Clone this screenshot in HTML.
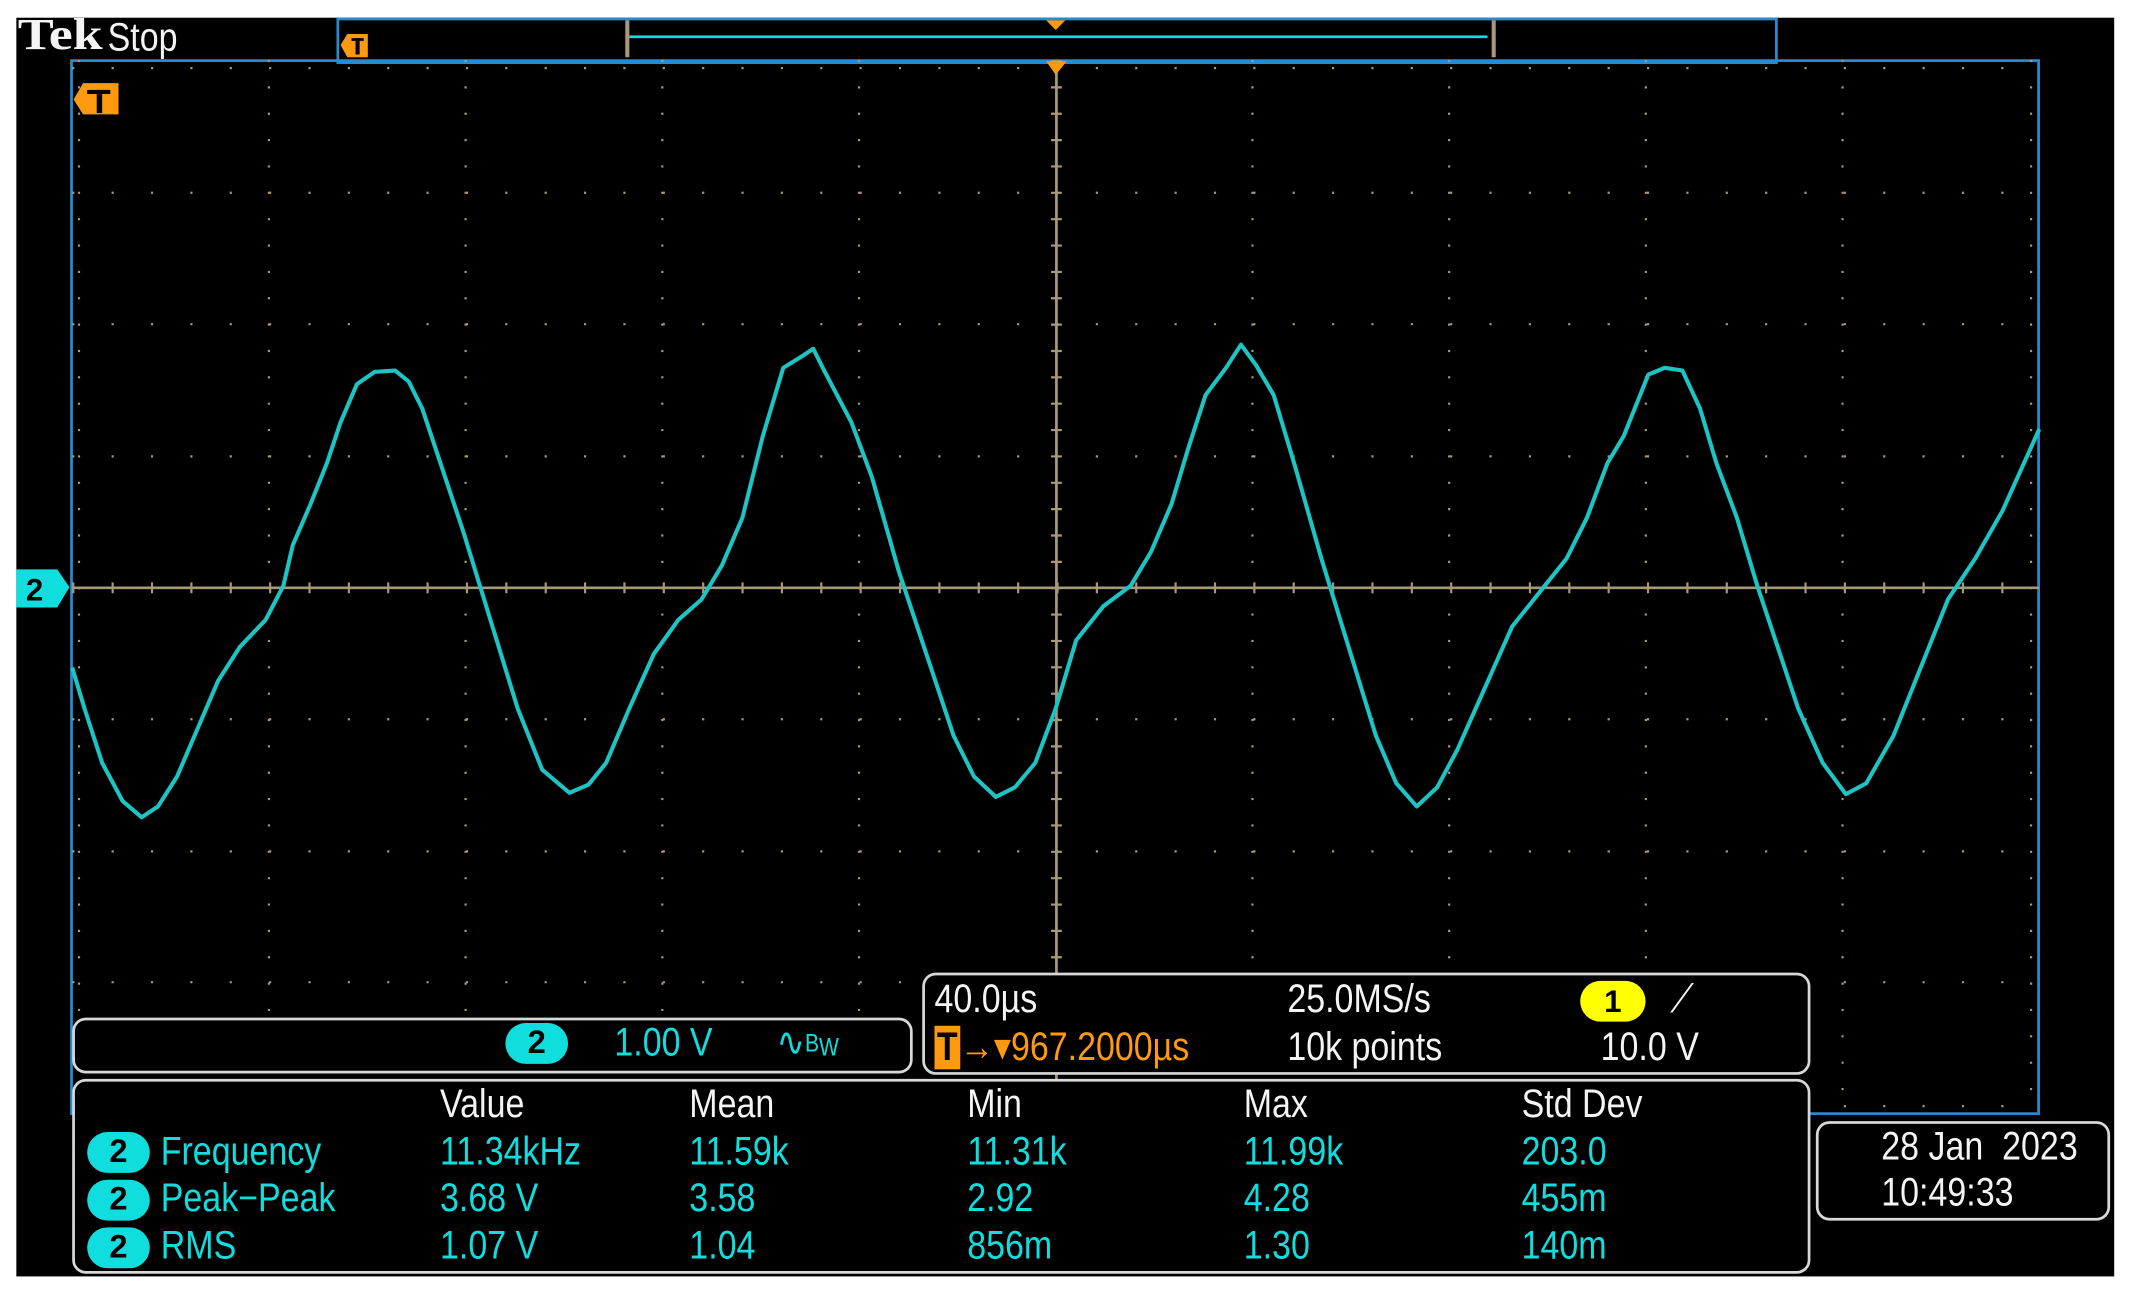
<!DOCTYPE html>
<html><head><meta charset="utf-8"><style>
html,body{margin:0;padding:0;background:#fff;width:2136px;height:1304px;overflow:hidden}
#s{position:absolute;left:0;top:0;width:1568px;height:957px;transform:scale(1.36224);transform-origin:0 0}
.t{position:absolute;font-family:"Liberation Sans Narrow","Liberation Sans",sans-serif;font-size:29px;line-height:30px;white-space:nowrap;transform:scaleX(0.86);transform-origin:0 0}
.w{color:#f4f4f4}.c{color:#10dede}.o{color:#ff9a10}
.b{position:absolute;border:2px solid #d8d8d8;border-radius:10px;background:#000}
.badge{position:absolute;width:46px;height:30px;border-radius:15px;background:#10dede;color:#000;font:bold 24px/30px "Liberation Sans",sans-serif;text-align:center}
</style></head><body><div id="s">
<div style="position:absolute;left:12px;top:13px;width:1540px;height:924px;background:#000"></div>
<div class="t w" style="left:13px;top:11px;font-size:33px;font-weight:bold;font-family:'Liberation Serif',serif;transform:scaleX(1.2)">Tek</div>
<div class="t w" style="left:79px;top:13px">Stop</div>
<div style="position:absolute;left:247px;top:13px;width:1054px;height:29px;border:2px solid #2a8ad0;border-bottom-width:3px"></div>
<div style="position:absolute;left:459px;top:15px;width:633px;height:27px;border-left:3px solid #a8987a;border-right:3px solid #a8987a"></div>
<div style="position:absolute;left:462px;top:26px;width:630px;height:2px;background:#10dede"></div>
<svg style="position:absolute;left:0;top:0" width="1568" height="957">
<polygon points="768,15 782,15 775,22" fill="#ff9a10"/>
<polygon points="250,33 255,25 270,25 270,42 255,42" fill="#ff9a10"/><rect x="258" y="28" width="9" height="2" fill="#000"/><rect x="261" y="28" width="3" height="12" fill="#000"/>
<polygon points="54,73 61,61 87,61 87,84 61,84" fill="#ff9a10"/><rect x="64" y="66" width="17" height="3" fill="#000"/><rect x="71" y="66" width="4" height="17" fill="#000"/>
<rect x="52.5" y="44.5" width="1444" height="773" fill="none" stroke="#2a8ad0" stroke-width="2"/>
<g stroke="#a8987a" stroke-width="1.6" fill="none">
<g stroke-dasharray="1.6 27.3">
<line x1="53" y1="141.5" x2="1497" y2="141.5"/><line x1="53" y1="238" x2="1497" y2="238"/><line x1="53" y1="335" x2="1497" y2="335"/><line x1="53" y1="528" x2="1497" y2="528"/><line x1="53" y1="625" x2="1497" y2="625"/><line x1="53" y1="721" x2="1497" y2="721"/><line x1="53" y1="50" x2="1497" y2="50"/><line x1="53" y1="812" x2="1497" y2="812"/>
</g>
<g stroke-dasharray="1.6 17.75">
<line x1="197.4" y1="44" x2="197.4" y2="818"/><line x1="341.8" y1="44" x2="341.8" y2="818"/><line x1="486.2" y1="44" x2="486.2" y2="818"/><line x1="630.6" y1="44" x2="630.6" y2="818"/><line x1="919.4" y1="44" x2="919.4" y2="818"/><line x1="1063.8" y1="44" x2="1063.8" y2="818"/><line x1="1208.2" y1="44" x2="1208.2" y2="818"/><line x1="1352.6" y1="44" x2="1352.6" y2="818"/><line x1="58" y1="44" x2="58" y2="818"/><line x1="1491" y1="44" x2="1491" y2="818"/>
</g>
<line x1="53" y1="431.5" x2="1497" y2="431.5" stroke-width="2"/>
<line x1="775.5" y1="44" x2="775.5" y2="818" stroke-width="2"/>
<line x1="53" y1="431.5" x2="1497" y2="431.5" stroke-width="8" stroke-dasharray="1.6 27.3"/>
<line x1="775.5" y1="44" x2="775.5" y2="818" stroke-width="8" stroke-dasharray="1.6 17.75"/>
</g>
<polygon points="768,45 783,45 775,55" fill="#ff9a10"/>
<polygon points="12,418 42,418 51,431 42,446 12,446" fill="#10dede"/>
<text x="19" y="441" font-family="Liberation Sans" font-weight="bold" font-size="23" fill="#000">2</text>
<polyline fill="none" stroke="#1cc4c4" stroke-width="3" stroke-linejoin="round" points="53,490 62,520 75,560 90,588 104,600 116,592 130,570 145,535 160,500 176,475 195,455 208,430 215,400 228,370 240,340 250,310 262,282 275,273 290,272 300,280 310,300 325,345 340,390 360,455 380,520 398,565 418,582 432,576 445,560 462,520 480,480 498,455 515,440 530,415 545,380 560,320 575,270 588,262 597,256 605,272 625,310 640,350 660,420 680,480 700,540 715,570 731,585 745,578 760,560 775,520 790,470 810,445 830,430 845,405 860,370 872,330 885,290 900,270 911,253 922,268 935,290 950,340 970,410 990,475 1010,540 1025,575 1040,592 1055,578 1070,550 1090,505 1110,460 1130,435 1150,410 1165,380 1180,340 1192,320 1210,275 1222,270 1235,272 1248,300 1260,340 1275,380 1290,430 1305,475 1320,520 1338,560 1355,583 1370,575 1390,540 1410,490 1430,440 1450,410 1470,375 1497,315"/>
</svg>
<!-- ch2 box -->
<div class="b" style="left:53px;top:747px;width:613px;height:37px"></div>
<div class="badge" style="left:371px;top:751px">2</div>
<div class="t c" style="left:451px;top:751px">1.00 V</div>
<div class="t c" style="left:570px;top:751px">∿<span style="font-size:18px;vertical-align:top">B</span><span style="font-size:18px">W</span></div>
<!-- timebase box -->
<div class="b" style="left:677px;top:714px;width:648px;height:71px"></div>
<div class="t w" style="left:686px;top:719px">40.0µs</div>
<div class="t w" style="left:945px;top:719px">25.0MS/s</div>
<div style="position:absolute;left:1160px;top:720px;width:48px;height:30px;border-radius:15px;background:#ffff00;color:#000;font:bold 23px/30px 'Liberation Sans',sans-serif;text-align:center">1</div>
<div class="t w" style="left:1226px;top:719px">⟋</div>
<div class="t o" style="left:686px;top:754px"><span style="background:#ff9a10;color:#000;font-weight:bold;padding:0 2px">T</span>→▾967.2000µs</div>
<div class="t w" style="left:945px;top:754px">10k points</div>
<div class="t w" style="left:1175px;top:754px">10.0 V</div>
<!-- measurements -->
<div class="b" style="left:53px;top:792px;width:1272px;height:139px"></div>
<div class="t w" style="left:323px;top:796px">Value</div>
<div class="t w" style="left:506px;top:796px">Mean</div>
<div class="t w" style="left:710px;top:796px">Min</div>
<div class="t w" style="left:913px;top:796px">Max</div>
<div class="t w" style="left:1117px;top:796px">Std Dev</div>
<div class="badge" style="left:64px;top:831px">2</div><div class="badge" style="left:64px;top:866px">2</div><div class="badge" style="left:64px;top:901px">2</div>
<div class="t c" style="left:118px;top:831px">Frequency</div><div class="t c" style="left:323px;top:831px">11.34kHz</div><div class="t c" style="left:506px;top:831px">11.59k</div><div class="t c" style="left:710px;top:831px">11.31k</div><div class="t c" style="left:913px;top:831px">11.99k</div><div class="t c" style="left:1117px;top:831px">203.0</div>
<div class="t c" style="left:118px;top:865px">Peak−Peak</div><div class="t c" style="left:323px;top:865px">3.68 V</div><div class="t c" style="left:506px;top:865px">3.58</div><div class="t c" style="left:710px;top:865px">2.92</div><div class="t c" style="left:913px;top:865px">4.28</div><div class="t c" style="left:1117px;top:865px">455m</div>
<div class="t c" style="left:118px;top:900px">RMS</div><div class="t c" style="left:323px;top:900px">1.07 V</div><div class="t c" style="left:506px;top:900px">1.04</div><div class="t c" style="left:710px;top:900px">856m</div><div class="t c" style="left:913px;top:900px">1.30</div><div class="t c" style="left:1117px;top:900px">140m</div>
<!-- date -->
<div class="b" style="left:1333px;top:823px;width:212px;height:69px"></div>
<div class="t w" style="left:1381px;top:827px">28 Jan&nbsp; 2023</div>
<div class="t w" style="left:1381px;top:861px">10:49:33</div>
</div></body></html>
